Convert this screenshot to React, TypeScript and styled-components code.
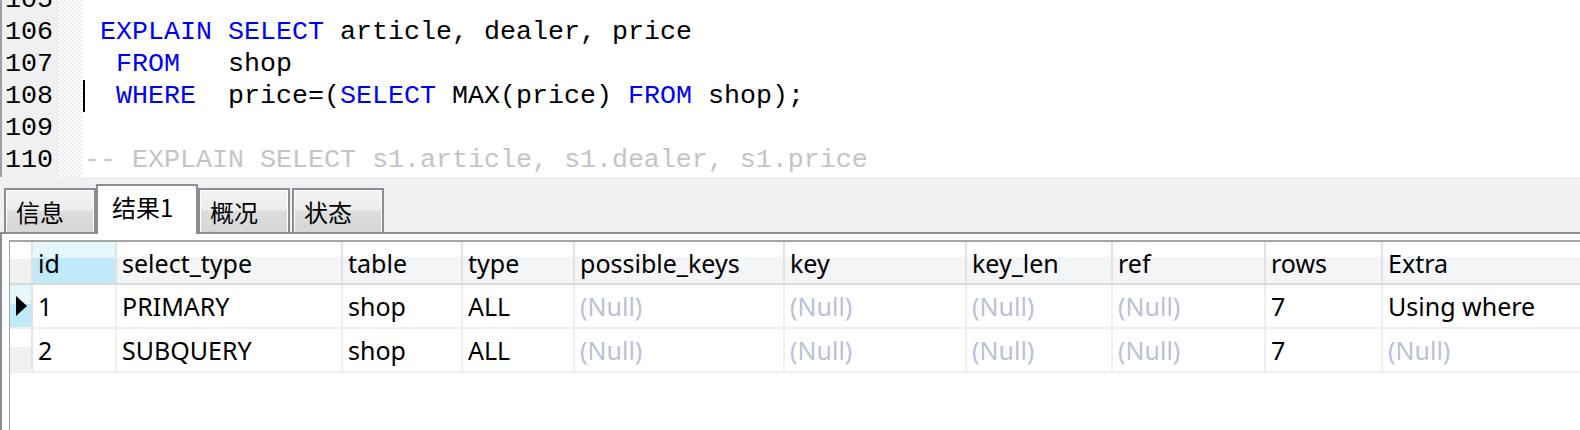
import React from "react";
import styled, { createGlobalStyle, css } from "styled-components";

const GlobalStyle = createGlobalStyle`
  html, body { margin: 0; padding: 0; background: #ffffff; overflow: hidden; }
  body { font-family: "Noto Sans", "Liberation Sans", "Noto Sans CJK SC", sans-serif; }
`;

const Page = styled.div`
  width: 1580px;
  height: 430px;
  display: flex;
  flex-direction: column;
  overflow: hidden;
`;

/* ---------- Editor ---------- */
const Editor = styled.div`
  height: 177px;
  flex: none;
  display: flex;
  overflow: hidden;
  border-left: 2px solid #a0a0a0;
  background: #ffffff;
`;

const Gutter = styled.div`
  width: 56px;
  flex: none;
  background: #f0f0f0;
  margin-top: -16px;
  padding-left: 3px;
  box-sizing: border-box;
`;

const FoldMargin = styled.div`
  width: 24px;
  flex: none;
  background: repeating-conic-gradient(#ececec 0 25%, #ffffff 0 50%) 0 0 / 4px 4px;
`;

const Code = styled.div`
  flex: 1;
  margin-top: -16px;
  padding-left: 2px;
`;

const mono = css`
  font-family: "Liberation Mono", "Courier New", monospace;
  font-size: 26.67px;
  line-height: 32px;
  height: 32px;
  white-space: pre;
`;

const LineNo = styled.div`
  ${mono};
  color: #000000;
`;

const CodeLine = styled.div`
  ${mono};
  color: #000000;
`;

const Kw = styled.span`
  color: #0000ff;
`;

const Comment = styled.span`
  color: #c4c4c4;
`;

const Caret = styled.span`
  display: inline-block;
  width: 0;
  height: 32px;
  border-left: 2px solid #000000;
  margin-left: -1px;
  margin-right: -1px;
  vertical-align: top;
`;

/* ---------- Tabs ---------- */
const TabStrip = styled.div`
  height: 55px;
  flex: none;
  background: #f0f0f0;
  border-bottom: 2px solid #8a8d94;
  display: flex;
  align-items: flex-end;
  padding-left: 4px;
  position: relative;
`;

const Tab = styled.div<{ $active?: boolean; $gap?: number }>`
  box-sizing: border-box;
  font-family: "Noto Sans CJK SC", "Liberation Sans", sans-serif;
  font-size: 24px;
  color: #000000;
  border: 2px solid #8a8d94;
  border-bottom: none;
  display: flex;
  align-items: center;
  margin-left: ${(p) => p.$gap ?? 0}px;
  ${(p) =>
    p.$active
      ? css`
          width: 102px;
          height: 50px;
          margin-bottom: -2px;
          padding: 0 0 8px 14px;
          background: #ffffff;
          position: relative;
          z-index: 1;
        `
      : css`
          width: 92px;
          height: 44px;
          padding-left: 10px;
          background: linear-gradient(
            to bottom,
            #f3f3f3 0%,
            #ececec 48%,
            #dddddd 50%,
            #d6d6d6 100%
          );
          box-shadow: inset 1px 1px 0 #ffffff, inset -1px 0 0 #ffffff;
        `}
`;

/* ---------- Result panel ---------- */
const Panel = styled.div`
  flex: 1;
  border-left: 2px solid #8a8d94;
  padding: 6px 0 0 7px;
  background: #ffffff;
`;

const Grid = styled.div`
  border-top: 2px solid #a5a5a5;
  border-left: 1px solid #a5a5a5;
  height: 100%;
  font-family: "Noto Sans", "Open Sans", "Liberation Sans", sans-serif;
  font-size: 25px;
`;

const COLS = "23px 84px 226px 120px 112px 210px 182px 146px 153px 117px 1fr";

const Row = styled.div<{ $header?: boolean }>`
  display: grid;
  grid-template-columns: ${COLS};
  height: ${(p) => (p.$header ? 41 : 42)}px;
  border-bottom: 2px solid ${(p) => (p.$header ? "#dadada" : "#efefef")};
`;

const HeaderCell = styled.div<{ $hl?: boolean; $last?: boolean }>`
  display: flex;
  align-items: center;
  padding-left: 5px;
  color: #000000;
  white-space: nowrap;
  overflow: hidden;
  border-right: ${(p) => (p.$last ? "none" : "2px solid #e2e2e2")};
  background: ${(p) =>
    p.$hl
      ? "linear-gradient(to bottom, #e4f7fd 0%, #e4f7fd 38%, #c0e9f9 38%, #c0e9f9 100%)"
      : "linear-gradient(to bottom, #ffffff 0%, #ffffff 37%, #f4f5f7 37%, #f4f5f7 100%)"};
`;

const Cell = styled.div<{ $null?: boolean; $last?: boolean }>`
  display: flex;
  align-items: center;
  padding-left: 5px;
  white-space: nowrap;
  overflow: hidden;
  color: ${(p) => (p.$null ? "#bcc0d6" : "#000000")};
  border-right: ${(p) => (p.$last ? "none" : "2px solid #efefef")};
`;

const Indicator = styled.div<{ $current?: boolean; $header?: boolean }>`
  display: flex;
  align-items: center;
  padding-left: 6px;
  border-right: 2px solid #e2e2e2;
  background: ${(p) =>
    p.$current
      ? "linear-gradient(to bottom, #e4f7fd 0%, #e4f7fd 45%, #c0e9f9 45%, #c0e9f9 100%)"
      : "linear-gradient(to bottom, #ffffff 0%, #ffffff 42%, #f0f0f0 42%, #f0f0f0 100%)"};
`;

const Arrow = styled.span`
  width: 0;
  height: 0;
  border-left: 11px solid #000000;
  border-top: 10px solid transparent;
  border-bottom: 10px solid transparent;
`;

const headers = [
  "id",
  "select_type",
  "table",
  "type",
  "possible_keys",
  "key",
  "key_len",
  "ref",
  "rows",
  "Extra",
];

const rows: (string | null)[][] = [
  ["1", "PRIMARY", "shop", "ALL", null, null, null, null, "7", "Using where"],
  ["2", "SUBQUERY", "shop", "ALL", null, null, null, null, "7", null],
];

export default function App() {
  return (
    <Page>
      <GlobalStyle />
      <Editor>
        <Gutter>
          {[105, 106, 107, 108, 109, 110].map((n) => (
            <LineNo key={n}>{n}</LineNo>
          ))}
        </Gutter>
        <FoldMargin />
        <Code>
          <CodeLine> </CodeLine>
          <CodeLine>
            {" "}
            <Kw>EXPLAIN</Kw> <Kw>SELECT</Kw> article, dealer, price
          </CodeLine>
          <CodeLine>
            {"  "}
            <Kw>FROM</Kw>
            {"   shop"}
          </CodeLine>
          <CodeLine>
            <Caret />
            {"  "}
            <Kw>WHERE</Kw>
            {"  price=("}
            <Kw>SELECT</Kw>
            {" MAX(price) "}
            <Kw>FROM</Kw>
            {" shop);"}
          </CodeLine>
          <CodeLine> </CodeLine>
          <CodeLine>
            <Comment>-- EXPLAIN SELECT s1.article, s1.dealer, s1.price</Comment>
          </CodeLine>
        </Code>
      </Editor>

      <TabStrip>
        <Tab>信息</Tab>
        <Tab $active>结果1</Tab>
        <Tab>概况</Tab>
        <Tab $gap={2}>状态</Tab>
      </TabStrip>

      <Panel>
        <Grid>
          <Row $header>
            <Indicator $header />
            {headers.map((h, i) => (
              <HeaderCell key={h} $hl={i === 0} $last={i === headers.length - 1}>
                {h}
              </HeaderCell>
            ))}
          </Row>
          {rows.map((r, ri) => (
            <Row key={ri}>
              <Indicator $current={ri === 0}>{ri === 0 && <Arrow />}</Indicator>
              {r.map((v, ci) => (
                <Cell key={ci} $null={v === null} $last={ci === r.length - 1}>
                  {v === null ? "(Null)" : v}
                </Cell>
              ))}
            </Row>
          ))}
        </Grid>
      </Panel>
    </Page>
  );
}
